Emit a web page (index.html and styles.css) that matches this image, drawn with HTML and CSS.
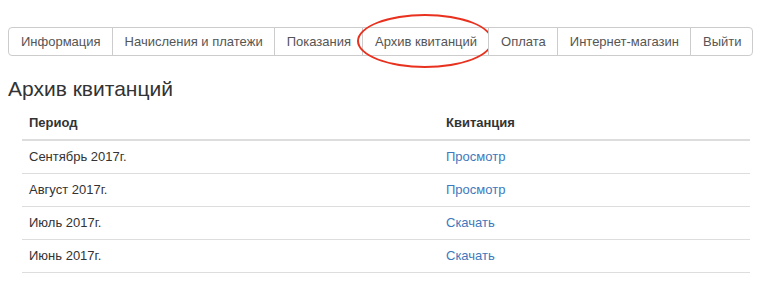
FILE: index.html
```html
<!DOCTYPE html>
<html lang="ru">
<head>
    <meta charset="UTF-8">
    <title>Архив квитанций</title>
    <link rel="stylesheet" href="styles.css">
</head>
<body>
    <nav class="menu">
        <a href="#">Информация</a>
        <a href="#">Начисления и платежи</a>
        <a href="#">Показания</a>
        <a href="#" class="marked">Архив квитанций</a>
        <a href="#">Оплата</a>
        <a href="#">Интернет-магазин</a>
        <a href="#">Выйти</a>
    </nav>
    <h1>Архив квитанций</h1>
    <table class="archive">
        <thead>
            <tr><th class="period">Период</th><th>Квитанция</th></tr>
        </thead>
        <tbody>
            <tr><td>Сентябрь 2017г.</td><td><a href="#">Просмотр</a></td></tr>
            <tr><td>Август 2017г.</td><td><a href="#">Просмотр</a></td></tr>
            <tr><td>Июль 2017г.</td><td><a href="#">Скачать</a></td></tr>
            <tr><td>Июнь 2017г.</td><td><a href="#">Скачать</a></td></tr>
        </tbody>
    </table>
</body>
</html>
```

FILE: styles.css
```css
body {
    margin: 8px;
    font-family: "Liberation Sans", Arial, sans-serif;
    font-size: 13px;
    color: #333;
    background-color: #fff;
}
.menu {
    display: flex;
    margin-top: 19px;
    width: 743px;
}
.menu a {
    position: relative;
    flex: none;
    height: 27px;
    line-height: 27px;
    padding: 0 11px 0 12px;
    border: 1px solid #ccc;
    margin-left: -1px;
    color: #555;
    text-decoration: none;
    background-color: #fff;
}
.menu a:first-child {
    margin-left: 0;
    border-radius: 4px 0 0 4px;
}
.menu a:last-child {
    border-radius: 0 4px 4px 0;
}
/* red hand-drawn ring around the current tab */
.menu a.marked::after {
    content: "";
    position: absolute;
    left: -6px;
    right: -5px;
    top: -14px;
    bottom: -13px;
    border: 2px solid #e8321f;
    border-radius: 50%;
}
h1 {
    font-size: 21px;
    font-weight: normal;
    line-height: 23px;
    margin: 21px 0 7px 0;
    color: #333;
}
.archive {
    border-collapse: collapse;
    margin-left: 14px;
    width: 728px;
}
.archive th,
.archive td {
    text-align: left;
    padding: 7px 7px;
    line-height: 18px;
    border-bottom: 1px solid #ddd;
}
.archive th {
    border-bottom: 2px solid #ddd;
    font-weight: bold;
}
.archive th.period {
    width: 403px;
}
.archive a {
    color: #3e79bd;
    text-decoration: none;
}
```
